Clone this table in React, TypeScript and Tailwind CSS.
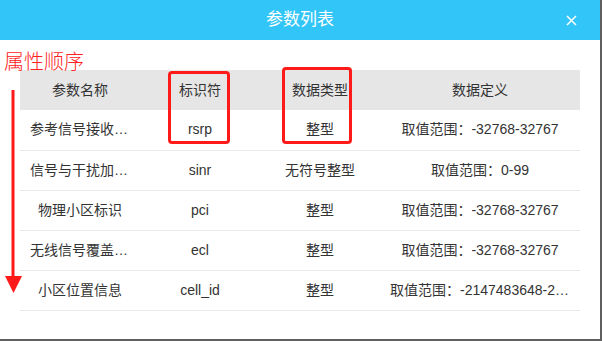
const rows = [
  { name: '参考信号接收功率', key: 'rsrp', type: '整型', def: '取值范围：-32768-32767' },
  { name: '信号与干扰加噪声比', key: 'sinr', type: '无符号整型', def: '取值范围：0-99' },
  { name: '物理小区标识', key: 'pci', type: '整型', def: '取值范围：-32768-32767' },
  { name: '无线信号覆盖等级', key: 'ecl', type: '整型', def: '取值范围：-32768-32767' },
  { name: '小区位置信息', key: 'cell_id', type: '整型', def: '取值范围：-2147483648-2147483647' },
];

const cell = 'px-[10px] truncate text-center';

export default function App() {
  return (
    <div
      className="w-[602px] h-[341px] bg-[#5f5f5f] overflow-hidden"
      style={{ fontFamily: '"Liberation Sans", "Noto Sans CJK SC", sans-serif' }}
    >
      <div className="relative w-[600px] h-[339px] bg-white">
        <div className="h-10 bg-[#31c6f7] flex items-center justify-center relative">
          <span className="text-white text-[17px]">参数列表</span>
          <button type="button" className="absolute right-[23px] top-[15px] text-white">
            <svg width="11" height="11" viewBox="0 0 11 11">
              <path d="M1 1L10 10M10 1L1 10" stroke="white" strokeWidth="1.5" />
            </svg>
          </button>
        </div>

        <div className="pt-[30px] pl-5">
          <table className="w-[560px] table-fixed text-[14px] text-[#333] border-collapse">
            <colgroup>
              <col className="w-[120px]" />
              <col className="w-[120px]" />
              <col className="w-[120px]" />
              <col className="w-[200px]" />
            </colgroup>
            <thead>
              <tr className="h-10 bg-[#e6e6e6]">
                <th className={`${cell} font-normal`}>参数名称</th>
                <th className={`${cell} font-normal`}>标识符</th>
                <th className={`${cell} font-normal`}>数据类型</th>
                <th className={`${cell} font-normal`}>数据定义</th>
              </tr>
            </thead>
            <tbody>
              {rows.map((r) => (
                <tr key={r.key} className="h-10 border-b border-[#e9e9e9]">
                  <td className={cell}>{r.name}</td>
                  <td className={cell}>{r.key}</td>
                  <td className={cell}>{r.type}</td>
                  <td className={cell}>{r.def}</td>
                </tr>
              ))}
            </tbody>
          </table>
        </div>

        {/* annotations */}
        <span
          className="absolute left-[4px] top-[49px] text-[20px] leading-[24px] text-[#ff2222]"
          style={{ fontFamily: '"Noto Sans CJK SC", sans-serif', fontWeight: 300 }}
        >
          属性顺序
        </span>
        <svg className="absolute left-[4px] top-[88px]" width="20" height="208" viewBox="0 0 20 208">
          <path d="M9 2V190" stroke="#ff1a1a" strokeWidth="3" />
          <path d="M1 188L18 188L9.5 205Z" fill="#ff1a1a" />
        </svg>
        <div className="absolute left-[168px] top-[71px] w-[62px] h-[73px] border-[3px] border-[#ff1a1a] rounded-[4px]" />
        <div className="absolute left-[282px] top-[67px] w-[70px] h-[77px] border-[3px] border-[#ff1a1a] rounded-[4px]" />
      </div>
    </div>
  );
}
